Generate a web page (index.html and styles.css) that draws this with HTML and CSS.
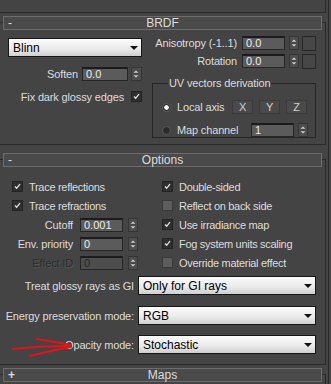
FILE: index.html
```html
<!DOCTYPE html>
<html lang="en">
<head>
    <meta charset="UTF-8">
    <title>VRayMtl options</title>
    <link rel="stylesheet" href="styles.css">
</head>
<body>
<div class="panel">
    <div class="stack">
        <div class="prev"></div>

        <!-- BRDF rollout -->
        <section class="rollout">
            <div class="rollout-head"><span class="sign">-</span><span class="title">BRDF</span><span></span></div>
            <div class="brdf">
                <div class="brdf-left">
                    <div class="dropdown brdf-type"><span class="dd-text">Blinn</span><i class="caret"></i></div>
                    <div class="row soften">
                        <label>Soften</label>
                        <span class="spinner w46">0.0</span>
                        <span class="arrows"><svg viewBox="0 0 10 14"><path d="M5 2.5l3 3H2z M5 11.5l3-3H2z"/><path class="mid" d="M2 7h6"/></svg></span>
                    </div>
                    <div class="row fix">
                        <label>Fix dark glossy edges</label>
                        <span class="check on"><svg viewBox="0 0 11 11"><path d="M2.5 5.5l2 2.2 4-5"/></svg></span>
                    </div>
                </div>
                <div class="brdf-right">
                    <div class="row aniso">
                        <label>Anisotropy (-1..1)</label>
                        <span class="spinner w43">0.0</span>
                        <span class="arrows"><svg viewBox="0 0 10 14"><path d="M5 2.5l3 3H2z M5 11.5l3-3H2z"/><path class="mid" d="M2 7h6"/></svg></span>
                        <span class="map-btn"></span>
                    </div>
                    <div class="row rotation">
                        <label>Rotation</label>
                        <span class="spinner w43">0.0</span>
                        <span class="arrows"><svg viewBox="0 0 10 14"><path d="M5 2.5l3 3H2z M5 11.5l3-3H2z"/><path class="mid" d="M2 7h6"/></svg></span>
                        <span class="map-btn"></span>
                    </div>
                    <div class="group">
                        <span class="legend">UV vectors derivation</span>
                        <div class="group-row local">
                            <span class="radio on"></span>
                            <span class="radio-label">Local axis</span>
                            <span class="axis-btn">X</span>
                            <span class="axis-btn">Y</span>
                            <span class="axis-btn">Z</span>
                        </div>
                        <div class="group-row channel">
                            <span class="radio"></span>
                            <span class="radio-label">Map channel</span>
                            <span class="spinner w43">1</span>
                            <span class="arrows"><svg viewBox="0 0 10 14"><path d="M5 2.5l3 3H2z M5 11.5l3-3H2z"/><path class="mid" d="M2 7h6"/></svg></span>
                        </div>
                    </div>
                </div>
            </div>
        </section>

        <!-- Options rollout -->
        <section class="rollout options-rollout">
            <div class="rollout-head"><span class="sign">-</span><span class="title">Options</span><span></span></div>
            <div class="options">
                <div class="opt-grid">
                    <div class="cell"><span class="check on"><svg viewBox="0 0 11 11"><path d="M2.5 5.5l2 2.2 4-5"/></svg></span><span class="check-label">Trace reflections</span></div>
                    <div class="cell"><span class="check on"><svg viewBox="0 0 11 11"><path d="M2.5 5.5l2 2.2 4-5"/></svg></span><span class="check-label">Double-sided</span></div>

                    <div class="cell"><span class="check on"><svg viewBox="0 0 11 11"><path d="M2.5 5.5l2 2.2 4-5"/></svg></span><span class="check-label">Trace refractions</span></div>
                    <div class="cell"><span class="check"></span><span class="check-label">Reflect on back side</span></div>

                    <div class="cell field"><label>Cutoff</label><span class="spinner w43">0.001</span><span class="arrows"><svg viewBox="0 0 10 14"><path d="M5 2.5l3 3H2z M5 11.5l3-3H2z"/><path class="mid" d="M2 7h6"/></svg></span></div>
                    <div class="cell"><span class="check on"><svg viewBox="0 0 11 11"><path d="M2.5 5.5l2 2.2 4-5"/></svg></span><span class="check-label">Use irradiance map</span></div>

                    <div class="cell field"><label>Env. priority</label><span class="spinner w43">0</span><span class="arrows"><svg viewBox="0 0 10 14"><path d="M5 2.5l3 3H2z M5 11.5l3-3H2z"/><path class="mid" d="M2 7h6"/></svg></span></div>
                    <div class="cell"><span class="check on"><svg viewBox="0 0 11 11"><path d="M2.5 5.5l2 2.2 4-5"/></svg></span><span class="check-label">Fog system units scaling</span></div>

                    <div class="cell field disabled"><label>Effect ID</label><span class="spinner w43">0</span><span class="arrows"><svg viewBox="0 0 10 14"><path d="M5 2.5l3 3H2z M5 11.5l3-3H2z"/><path class="mid" d="M2 7h6"/></svg></span></div>
                    <div class="cell"><span class="check"></span><span class="check-label">Override material effect</span></div>
                </div>

                <div class="select-row first">
                    <label>Treat glossy rays as GI</label>
                    <div class="dropdown wide"><span class="dd-text">Only for GI rays</span><i class="caret"></i></div>
                </div>
                <div class="select-row second">
                    <label>Energy preservation mode:</label>
                    <div class="dropdown wide"><span class="dd-text">RGB</span><i class="caret"></i></div>
                </div>
                <div class="select-row third">
                    <label>Opacity mode:</label>
                    <div class="dropdown wide"><span class="dd-text">Stochastic</span><i class="caret"></i></div>
                </div>
            </div>
        </section>

        <!-- Maps rollout (collapsed) -->
        <section class="rollout maps-rollout">
            <div class="rollout-head"><span class="sign plus">+</span><span class="title">Maps</span><span></span></div>
        </section>
    </div>
    <div class="edge"></div>

    <svg class="annotation" viewBox="0 0 80 30" width="80" height="30">
        <path d="M13 19 C 30 17, 50 16, 71 16"/>
        <path d="M37 9 C 50 11, 62 13, 71 15"/>
        <path d="M30 26 C 45 22, 60 19, 71 17"/>
    </svg>
</div>
</body>
</html>
```

FILE: styles.css
```css
body {
    margin: 0;
    background-color: #444444;
    color: #dcdcdc;
    font-family: "Liberation Sans", Arial, sans-serif;
    font-size: 11px;
    letter-spacing: -0.15px;
    width: 331px;
    height: 384px;
    overflow: hidden;
    white-space: nowrap;
}

.panel {
    position: relative;
    display: flex;
    width: 331px;
    height: 384px;
}

.stack {
    width: 326px;
}

.edge {
    flex: 1;
    margin-left: 2px;
    border-left: 1px solid #2a2a2a;
}

.prev {
    height: 12px;
    border-bottom: 1px solid #2a2a2a;
    border-right: 1px solid #2a2a2a;
}

/* rollouts */
.rollout {
    border: 1px solid #2a2a2a;
    border-left: 0;
    margin-top: 9px;
}

.options-rollout {
    margin-top: 14px;
}

.maps-rollout {
    margin-top: 9px;
    height: 20px;
    border-bottom: 0;
}

.rollout-head {
    display: grid;
    grid-template-columns: 20px 1fr 20px;
    align-items: center;
    height: 12px;
    margin: -7px 3px 0 3px;
    border: 1px solid #6c6c6c;
    background-color: #4a4a4a;
    line-height: 12px;
    font-size: 12px;
    letter-spacing: 0;
}

.sign {
    padding-left: 4px;
}

.plus {
    font-weight: bold;
}

.title {
    text-align: center;
}

/* generic widgets */
.row {
    display: flex;
    align-items: center;
    justify-content: flex-end;
    height: 14px;
}

.row label {
    margin-right: 5px;
}

.spinner {
    box-sizing: border-box;
    height: 14px;
    padding-left: 3px;
    background-color: #5b5b5b;
    border: 1px solid #262626;
    border-top: 2px solid #1c1c1c;
    color: #ececec;
    line-height: 11px;
    font-size: 11px;
    letter-spacing: 0;
}

.w46 {
    width: 46px;
}

.w43 {
    width: 43px;
}

.arrows {
    box-sizing: border-box;
    width: 10px;
    height: 14px;
    margin-left: 4px;
    background-color: #4e4e4e;
    border: 1px solid #353535;
    display: flex;
}

.arrows svg {
    width: 8px;
    height: 12px;
}

.arrows path {
    fill: #cfcfcf;
}

.arrows .mid {
    stroke: #3a3a3a;
    stroke-width: 1;
}

.map-btn {
    box-sizing: border-box;
    width: 14px;
    height: 15px;
    margin-left: 3px;
    border: 1px solid #262626;
    background-color: #474747;
}

.check {
    box-sizing: border-box;
    display: inline-block;
    flex-shrink: 0;
    width: 11px;
    height: 11px;
    border: 1px solid #3a3a3a;
    background-color: #5d5d5d;
}

.check.on {
    background-color: #2f2f2f;
    border-color: #232323;
}

.check svg {
    display: block;
    width: 9px;
    height: 9px;
}

.check path {
    fill: none;
    stroke: #e4e4e4;
    stroke-width: 1.6;
}

.dropdown {
    box-sizing: border-box;
    display: flex;
    align-items: center;
    justify-content: space-between;
    height: 19px;
    padding: 0 3px 0 4px;
    border: 1px solid #161616;
    background: linear-gradient(#fbfbfb, #e9e9e9 60%, #cfcfcf);
    color: #000;
    font-size: 12px;
    letter-spacing: 0;
}

.caret {
    width: 0;
    height: 0;
    border-left: 4px solid transparent;
    border-right: 4px solid transparent;
    border-top: 4px solid #111;
}

/* BRDF */
.brdf {
    display: flex;
    height: 114px;
    padding-left: 8px;
}

.brdf-left {
    width: 134px;
}

.brdf-type {
    margin-top: 8px;
}

.soften {
    margin-top: 10px;
}

.soften label {
    margin-right: 4px;
}

.soften .arrows {
    width: 11px;
    margin-left: 3px;
}

.fix {
    margin-top: 10px;
    height: 11px;
}

.fix label {
    margin-right: 7px;
}

.brdf-right {
    width: 166px;
    margin-left: 8px;
}

.aniso {
    margin-top: 6px;
}

.rotation {
    margin-top: 4px;
}

.group {
    box-sizing: border-box;
    height: 55px;
    margin: 15px 0 0 2px;
    padding-left: 9px;
    border: 1px solid #262626;
}

.legend {
    display: inline-block;
    margin: -7px 0 0 6px;
    padding: 0 1px;
    background-color: #444444;
    line-height: 13px;
    font-size: 11px;
    vertical-align: top;
}

.group-row {
    display: flex;
    align-items: center;
    height: 14px;
}

.local {
    margin-top: 4px;
}

.channel {
    margin-top: 9px;
}

.radio {
    box-sizing: border-box;
    flex-shrink: 0;
    width: 9px;
    height: 9px;
    border-radius: 50%;
    background-color: #2c2c2c;
    border: 1px solid #5a5a5a;
}

.radio.on {
    background: radial-gradient(circle, #ffffff 0 2px, #2c2c2c 2.5px);
}

.radio-label {
    margin-left: 6px;
    font-size: 11px;
}

.local .radio-label {
    width: 55px;
}

.channel .radio-label {
    width: 74px;
}

.axis-btn {
    box-sizing: border-box;
    width: 21px;
    height: 14px;
    margin-right: 6px;
    border: 1px solid #3a3a3a;
    background-color: #4a4a4a;
    text-align: center;
    line-height: 12px;
    color: #d0d0d0;
}

/* Options */
.options {
    height: 197px;
    padding-top: 10px;
    box-sizing: border-box;
}

.opt-grid {
    display: grid;
    grid-template-columns: 150px 1fr;
    grid-auto-rows: 19px;
    padding-left: 12px;
}

.cell {
    display: flex;
    align-items: center;
    letter-spacing: -0.3px;
}

.check-label {
    margin-left: 6px;
}

.field label {
    width: 61px;
    margin-right: 7px;
    text-align: right;
    letter-spacing: -0.15px;
}

.field .arrows {
    margin-left: 5px;
}

.disabled label {
    color: #2c2c2c;
    text-shadow: 1px 1px 0 #555;
}

.disabled .spinner {
    background-color: #4d4d4d;
    color: #2a2a2a;
}

.select-row {
    display: flex;
    align-items: center;
}

.select-row label {
    width: 138px;
    padding-right: 4px;
    box-sizing: border-box;
    text-align: right;
}

.select-row .wide {
    width: 178px;
    flex-shrink: 0;
}

.first {
    margin-top: 4px;
}

.second {
    margin-top: 11px;
}

.third {
    margin-top: 10px;
}

/* hand-drawn marker over the panel */
.annotation {
    position: absolute;
    left: 0;
    top: 330px;
}

.annotation path {
    fill: none;
    stroke: #e0141a;
    stroke-width: 2;
    stroke-linecap: round;
}
```
